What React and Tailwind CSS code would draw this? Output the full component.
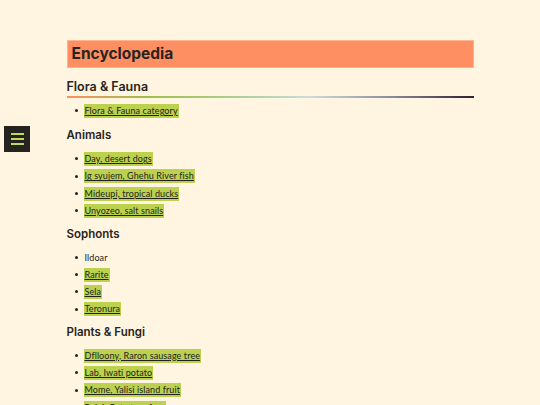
import React from "react";

const sections = [
  {
    title: "Animals",
    items: [
      { label: "Day, desert dogs", link: true },
      { label: "Ig syujem, Ghehu River fish", link: true },
      { label: "Mideupi, tropical ducks", link: true },
      { label: "Unyozeo, salt snails", link: true },
    ],
  },
  {
    title: "Sophonts",
    items: [
      { label: "Ildoar", link: false },
      { label: "Rarite", link: true },
      { label: "Sela", link: true },
      { label: "Teronura", link: true },
    ],
  },
  {
    title: "Plants & Fungi",
    items: [
      { label: "Dflloony, Raron sausage tree", link: true },
      { label: "Lab, Iwati potato", link: true },
      { label: "Mome, Yalisi island fruit", link: true },
      { label: "Pulai, Osta tree fern", link: true },
    ],
  },
];

const heading = { fontFamily: "Inter, 'Noto Sans', sans-serif" };
const body = { fontFamily: "Lato, 'Noto Sans', sans-serif" };

const Item = ({ label, link }) => (
  <li className="h-[17.33px] flex items-center">
    <span className="w-[17px] flex justify-center pl-[3px]">
      <span className="w-[3px] h-[3px] rounded-full bg-[#222]"></span>
    </span>
    {link ? (
      <a href="#" className="bg-[#bcd24f] px-[1px] h-[14px] leading-[14px] text-[9px] tracking-[0.1px] text-[#222] underline" style={body}>
        {label}
      </a>
    ) : (
      <span className="px-[1px] text-[9px] tracking-[0.1px] text-[#222]" style={body}>{label}</span>
    )}
  </li>
);

export default function App() {
  return (
    <div className="h-[405px] overflow-hidden bg-[#fff5e1] relative">
      <button className="absolute left-[4px] top-[126px] w-[26px] h-[26px] bg-[#25231f] flex flex-col items-center justify-center gap-[3px]">
        <span className="w-[13px] h-[2px] bg-[#c2d85a]"></span>
        <span className="w-[13px] h-[2px] bg-[#c2d85a]"></span>
        <span className="w-[13px] h-[2px] bg-[#c2d85a]"></span>
      </button>

      <main className="w-[407px] mx-auto pt-[40px]">
        <h1 className="h-[28px] bg-[#fd8f62] border border-[#ffb38f] px-[4px] flex items-center text-[15.5px] font-bold text-[#2a2420]" style={heading}>
          Encyclopedia
        </h1>

        <h2 className="mt-[11px] text-[12.5px] font-semibold text-[#2a2420] leading-[16px]" style={heading}>
          Flora &amp; Fauna
        </h2>
        <div className="mt-[1px] h-[2px]" style={{ backgroundImage: "linear-gradient(to right, #fd8f62 0%, #9cc04a 20%, #b0d0a0 45%, #c8dcdc 60%, #8a8a98 80%, #2e2030 100%)" }}></div>

        <ul className="mt-[4px]">
          <Item label="Flora & Fauna category" link />
        </ul>

        {sections.map((s, i) => (
          <section key={s.title}>
            <h3
              className={`${i === 0 ? "mt-[8px]" : "mt-[6px]"} text-[11.5px] font-semibold text-[#2a2420] leading-[16px]`}
              style={heading}
            >
              {s.title}
            </h3>
            <ul className="mt-[7px]">
              {s.items.map((it) => (
                <Item key={it.label} {...it} />
              ))}
            </ul>
          </section>
        ))}
      </main>
    </div>
  );
}
